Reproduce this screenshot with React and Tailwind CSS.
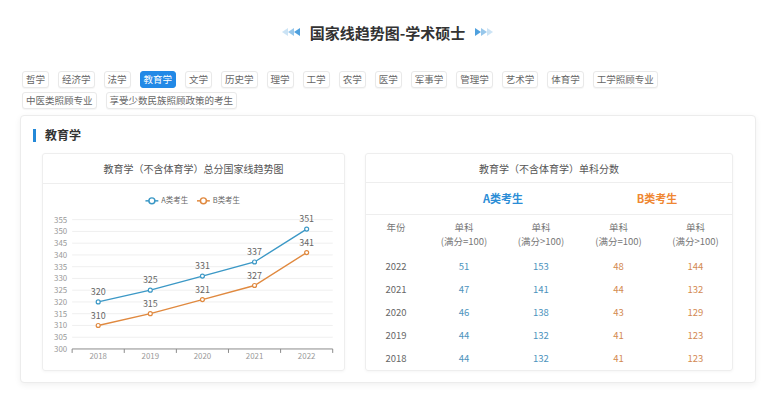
import React from 'react';

const tabsTop = [
  '哲学', '经济学', '法学', '教育学', '文学', '历史学', '理学', '工学', '农学',
  '医学', '军事学', '管理学', '艺术学', '体育学', '工学照顾专业',
];
const tabsBottom = ['中医类照顾专业', '享受少数民族照顾政策的考生'];

const years = ['2018', '2019', '2020', '2021', '2022'];
const seriesA = [320, 325, 331, 337, 351];
const seriesB = [310, 315, 321, 327, 341];

const tableRows = [
  ['2022', 51, 153, 48, 144],
  ['2021', 47, 141, 44, 132],
  ['2020', 46, 138, 43, 129],
  ['2019', 44, 132, 41, 123],
  ['2018', 44, 132, 41, 123],
];

const COLOR_A = '#3b98c6';
const COLOR_B = '#e0893f';

// chart geometry (svg coords inside the card body)
const X0 = 28;
const X1 = 291;
const band = (X1 - X0) / 5;
const yOf = (v) => 166.5 - (v - 300) * 2.373;
const xOf = (i) => X0 + band * i + band / 2;

const Arrows = ({ flip }) => (
  <svg width="18" height="8" viewBox="0 0 18 8" className={flip ? 'rotate-180' : ''}>
    <polygon points="6,0 6,8 0,4" fill="#2f8fd8" opacity="0.25" />
    <polygon points="12,0 12,8 6,4" fill="#2f8fd8" opacity="0.5" />
    <polygon points="18,0 18,8 12,4" fill="#2f8fd8" opacity="0.85" />
  </svg>
);

const Tab = ({ label }) => (
  <div
    className={`h-[17px] px-[3px] flex items-center text-[9.5px] leading-none rounded-[3px] border ${
      label === '教育学'
        ? 'bg-[#2289e6] border-[#2289e6] text-white'
        : 'bg-white border-[#e9e9e9] text-[#666] shadow-[0_1px_1px_rgba(0,0,0,0.04)]'
    }`}
  >
    {label}
  </div>
);

const TrendChart = () => {
  const ticks = [];
  for (let v = 300; v <= 355; v += 5) ticks.push(v);
  const path = (data) => data.map((v, i) => `${i ? 'L' : 'M'}${xOf(i)},${yOf(v)}`).join(' ');

  return (
    <svg width="303" height="188" viewBox="0 0 303 188">
      {/* legend */}
      <line x1="102" y1="17" x2="115" y2="17" stroke={COLOR_A} strokeWidth="1.5" />
      <circle cx="108.5" cy="17" r="3" fill="white" stroke={COLOR_A} strokeWidth="1.5" />
      <text x="118" y="19.5" fontSize="7.5" fill="#666">A类考生</text>
      <line x1="154" y1="17" x2="167" y2="17" stroke={COLOR_B} strokeWidth="1.5" />
      <circle cx="160.5" cy="17" r="3" fill="white" stroke={COLOR_B} strokeWidth="1.5" />
      <text x="170" y="19.5" fontSize="7.5" fill="#666">B类考生</text>

      {/* grid + y labels */}
      {ticks.map((v) => (
        <g key={v}>
          {v !== 300 && <line x1={X0} y1={yOf(v)} x2={X1} y2={yOf(v)} stroke="#efefef" strokeWidth="1" />}
          <text x="23" y={yOf(v) + 3} fontSize="8" fill="#999" textAnchor="end">{v}</text>
        </g>
      ))}

      {/* x axis */}
      <line x1={X0} y1={yOf(300)} x2={X1} y2={yOf(300)} stroke="#8a8a8a" strokeWidth="1" />
      {[0, 1, 2, 3, 4, 5].map((i) => (
        <line key={i} x1={X0 + band * i} y1={yOf(300)} x2={X0 + band * i} y2={yOf(300) + 4} stroke="#8a8a8a" strokeWidth="1" />
      ))}
      {years.map((y, i) => (
        <text key={y} x={xOf(i)} y="177" fontSize="8" fill="#999" textAnchor="middle">{y}</text>
      ))}

      {/* series */}
      {[[seriesA, COLOR_A], [seriesB, COLOR_B]].map(([data, color]) => (
        <g key={color}>
          <path d={path(data)} fill="none" stroke={color} strokeWidth="1.4" />
          {data.map((v, i) => (
            <g key={i}>
              <circle cx={xOf(i)} cy={yOf(v)} r="2" fill="white" stroke={color} strokeWidth="1.2" />
              <text x={xOf(i)} y={yOf(v) - 7} fontSize="9" fill="#666" textAnchor="middle">{v}</text>
            </g>
          ))}
        </g>
      ))}
    </svg>
  );
};

const ScoreTable = () => (
  <div className="flex flex-col">
    <div className="grid grid-cols-[60px_76px_78px_77px_77px] h-[32px] border-b border-[#eeeeee] items-center">
      <div />
      <div className="col-span-2 text-center text-[11px] font-bold text-[#2b8dd6]">A类考生</div>
      <div className="col-span-2 text-center text-[11px] font-bold text-[#ef8733]">B类考生</div>
    </div>
    <div className="grid grid-cols-[60px_76px_78px_77px_77px] h-[40px] pt-[5px] text-[9.5px] leading-[14px] text-[#777] text-center">
      <div>年份</div>
      <div>单科<br />(满分=100)</div>
      <div>单科<br />(满分&gt;100)</div>
      <div>单科<br />(满分=100)</div>
      <div>单科<br />(满分&gt;100)</div>
    </div>
    {tableRows.map((r) => (
      <div key={r[0]} className="grid grid-cols-[60px_76px_78px_77px_77px] h-[23px] items-center text-center text-[9.5px]">
        <div className="text-[#666]">{r[0]}</div>
        <div className="text-[#4d93bd]">{r[1]}</div>
        <div className="text-[#4d93bd]">{r[2]}</div>
        <div className="text-[#d38a52]">{r[3]}</div>
        <div className="text-[#d38a52]">{r[4]}</div>
      </div>
    ))}
  </div>
);

export default function App() {
  return (
    <div className="w-[775px] h-[400px] bg-white overflow-hidden font-['Noto_Sans_CJK_SC','Noto_Sans',sans-serif]">
      {/* Title */}
      <div className="flex items-center justify-center gap-[10px] h-[24px] mt-[20px]">
        <Arrows />
        <h1 className="text-[15px] font-bold text-[#333] leading-none">国家线趋势图-学术硕士</h1>
        <Arrows flip />
      </div>

      {/* Category tabs */}
      <div className="px-[22px] mt-[27px] flex flex-col gap-[4px]">
        <div className="flex gap-[9px]">
          {tabsTop.map((t) => <Tab key={t} label={t} />)}
        </div>
        <div className="flex gap-[9px]">
          {tabsBottom.map((t) => <Tab key={t} label={t} />)}
        </div>
      </div>

      {/* Section card */}
      <div className="ml-[20px] mt-[6px] w-[736px] h-[268px] rounded-[4px] border border-[#ececec] shadow-[0_2px_6px_rgba(0,0,0,0.06)] bg-white">
        <div className="flex items-center gap-[9px] pl-[12px] mt-[12px] h-[14px]">
          <div className="w-[3px] h-[13px] bg-[#2489d8]" />
          <span className="text-[12px] font-bold text-[#333] leading-none">教育学</span>
        </div>

        <div className="flex gap-[20px] pl-[21px] mt-[11px]">
          {/* Trend chart card */}
          <div className="w-[303px] h-[218px] border border-[#eeeeee] rounded-[3px] shadow-[0_1px_3px_rgba(0,0,0,0.04)] flex flex-col">
            <div className="h-[30px] border-b border-[#eeeeee] flex items-center justify-center text-[10px] text-[#555]">
              教育学（不含体育学）总分国家线趋势图
            </div>
            <TrendChart />
          </div>

          {/* Score table card */}
          <div className="w-[368px] h-[218px] border border-[#eeeeee] rounded-[3px] shadow-[0_1px_3px_rgba(0,0,0,0.04)] flex flex-col">
            <div className="h-[30px] border-b border-[#eeeeee] flex items-center justify-center text-[10px] text-[#555]">
              教育学（不含体育学）单科分数
            </div>
            <ScoreTable />
          </div>
        </div>
      </div>
    </div>
  );
}
